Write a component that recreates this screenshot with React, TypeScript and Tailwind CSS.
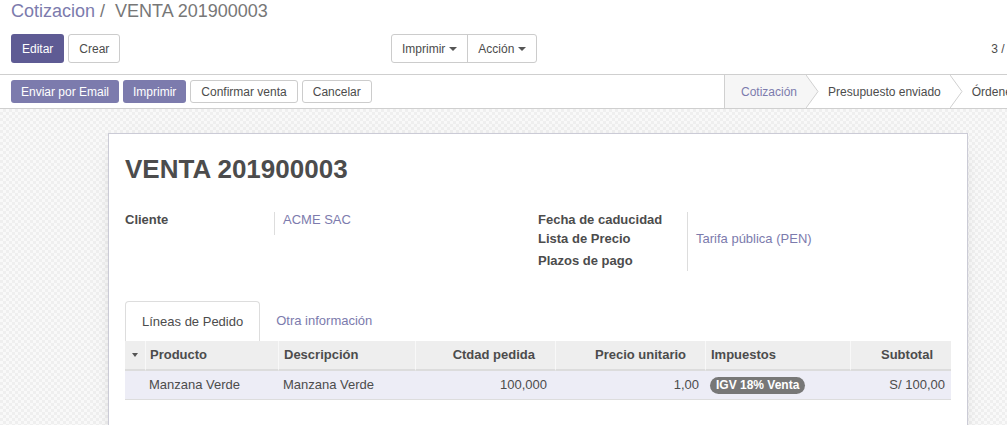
import React from 'react';

const Caret = () => (
  <span className="ml-[4px] inline-block h-0 w-0 border-x-[4px] border-t-[4px] border-x-transparent border-t-[#555] align-middle" />
);

const Arrow = ({ active }: { active?: boolean }) => (
  <svg className="absolute right-[-12px] top-0 z-10" width="13" height="33" viewBox="0 0 13 33">
    <polygon points="0,0 12,16.5 0,33" fill={active ? '#f6f6f6' : '#ffffff'} />
    <polyline points="0,0 12,16.5 0,33" fill="none" stroke="#d0d0d0" strokeWidth="1" />
  </svg>
);

const App: React.FC = () => {
  const status = [
    { label: 'Cotización', active: true, pl: 'pl-[16px]' },
    { label: 'Presupuesto enviado', active: false, pl: 'pl-[21px]' },
    { label: 'Órdenes de venta', active: false, pl: 'pl-[21px]' },
  ];

  return (
    <div className="h-[425px] w-[1007px] overflow-hidden bg-white font-['Liberation_Sans',Arial,sans-serif] text-[13px] text-[#4c4c4c]">
      {/* control panel */}
      <div className="border-b border-[#cfcfcf] pb-[11px]">
        <div className="h-[22px] whitespace-nowrap pl-[11px] text-[18px] leading-[22px]">
          <span className="text-[#7c7bad]">Cotizacion</span>
          <span className="text-[#777]"> /&nbsp; VENTA 201900003</span>
        </div>
        <div className="mt-[12px] flex h-[29px] items-stretch whitespace-nowrap text-[12px]">
          <div className="flex w-[391px] shrink-0 gap-[4px] pl-[11px]">
            <button className="rounded-[3px] bg-[#5e5b94] px-[11px] text-white">Editar</button>
            <button className="rounded-[3px] border border-[#ccc] bg-white px-[10px] text-[#4c4c4c]">Crear</button>
          </div>
          <div className="flex shrink-0 rounded-[3px] border border-[#ccc] bg-white">
            <button className="flex items-center border-r border-[#ccc] pl-[10px] pr-[10px]">
              Imprimir
              <Caret />
            </button>
            <button className="flex items-center pl-[10px] pr-[10px]">
              Acción
              <Caret />
            </button>
          </div>
          <div className="ml-[454px] flex shrink-0 items-center">3 / 4</div>
        </div>
      </div>

      {/* statusbar */}
      <div className="flex h-[34px] whitespace-nowrap border-b border-[#cfcfcf] text-[12px]">
        <div className="flex w-[724px] shrink-0 gap-[4px] pl-[11px] pt-[5px]">
          <button className="h-[23px] rounded-[3px] bg-[#7c7bad] px-[10px] text-white">Enviar por Email</button>
          <button className="h-[23px] rounded-[3px] bg-[#7c7bad] px-[10px] text-white">Imprimir</button>
          <button className="h-[23px] rounded-[3px] border border-[#ccc] bg-white px-[10px]">Confirmar venta</button>
          <button className="h-[23px] rounded-[3px] border border-[#ccc] bg-white px-[10px]">Cancelar</button>
        </div>
        <div className="flex shrink-0 border-l border-[#d0d0d0]">
          {status.map((s) => (
            <div
              key={s.label}
              className={`relative flex h-[33px] items-center ${s.pl} pr-[10px] ${
                s.active ? 'bg-[#f6f6f6] text-[#7c7bad]' : 'bg-white text-[#4c4c4c]'
              }`}
            >
              {s.label}
              <Arrow active={s.active} />
            </div>
          ))}
        </div>
      </div>

      {/* sheet background */}
      <div className="h-full bg-[image:repeating-conic-gradient(#efefef_0_25%,#f9f9f9_0_50%)] bg-[length:6px_6px] pt-[24px]">
        <div className="ml-[108px] w-[860px] border border-[#cbcbd6] bg-white px-[16px] pb-[60px] pt-[20px] shadow-[0_5px_20px_-15px_rgba(0,0,0,0.6)]">
          <h1 className="h-[30px] text-[26px] font-bold leading-[30px] text-[#4c4c4c]">VENTA 201900003</h1>

          <div className="mt-[28px] grid grid-cols-2">
            <div className="flex items-start">
              <div className="flex h-[23px] w-[150px] border-r border-[#ddd] font-bold leading-[16px]">Cliente</div>
              <div className="pl-[8px] leading-[16px] text-[#7c7bad]">ACME SAC</div>
            </div>
            <div className="flex">
              <div className="w-[150px] border-r border-[#ddd] font-bold">
                <div className="h-[16px] leading-[16px]">Fecha de caducidad</div>
                <div className="h-[21px] leading-[21px]">Lista de Precio</div>
                <div className="h-[22px] pt-[1px] leading-[21px]">Plazos de pago</div>
              </div>
              <div className="pl-[8px]">
                <div className="h-[16px]" />
                <div className="h-[21px] leading-[21px] text-[#7c7bad]">Tarifa pública (PEN)</div>
              </div>
            </div>
          </div>

          {/* notebook */}
          <div className="mt-[30px] flex h-[40px]">
            <div className="flex items-center rounded-t-[4px] border-x border-t border-[#ddd] bg-white px-[16px]">
              Líneas de Pedido
            </div>
            <div className="flex items-center px-[16px] text-[#7c7bad]">Otra información</div>
          </div>

          <div className="grid grid-cols-[20px_133px_137px_140px_150px_145px_101px] whitespace-nowrap">
            {/* header */}
            <div className="flex h-[30px] items-center justify-center border-b-2 border-[#dcdcdc] bg-[#eeeeee]">
              <span className="inline-block h-0 w-0 border-x-[3.5px] border-t-[4px] border-x-transparent border-t-[#555]" />
            </div>
            <div className="flex h-[30px] items-center border-b-2 border-l border-[#dcdcdc] border-l-[#f8f8f8] bg-[#eeeeee] pl-[4px] font-bold">
              Producto
            </div>
            <div className="flex h-[30px] items-center border-b-2 border-l border-[#dcdcdc] border-l-[#f8f8f8] bg-[#eeeeee] pl-[5px] font-bold">
              Descripción
            </div>
            <div className="flex h-[30px] items-center justify-end border-b-2 border-l border-[#dcdcdc] border-l-[#f8f8f8] bg-[#eeeeee] pr-[20px] font-bold">
              Ctdad pedida
            </div>
            <div className="flex h-[30px] items-center justify-end border-b-2 border-l border-[#dcdcdc] border-l-[#f8f8f8] bg-[#eeeeee] pr-[19px] font-bold">
              Precio unitario
            </div>
            <div className="flex h-[30px] items-center border-b-2 border-l border-[#dcdcdc] border-l-[#f8f8f8] bg-[#eeeeee] pl-[5px] font-bold">
              Impuestos
            </div>
            <div className="flex h-[30px] items-center justify-end border-b-2 border-l border-[#dcdcdc] border-l-[#f8f8f8] bg-[#eeeeee] pr-[18px] font-bold">
              Subtotal
            </div>

            {/* row */}
            <div className="h-[29px] border-b border-[#dddddd] bg-[#ededf6]" />
            <div className="flex h-[29px] items-center border-b border-[#dddddd] bg-[#ededf6] pl-[4px]">Manzana Verde</div>
            <div className="flex h-[29px] items-center border-b border-[#dddddd] bg-[#ededf6] pl-[5px]">Manzana Verde</div>
            <div className="flex h-[29px] items-center justify-end border-b border-[#dddddd] bg-[#ededf6] pr-[8px]">100,000</div>
            <div className="flex h-[29px] items-center justify-end border-b border-[#dddddd] bg-[#ededf6] pr-[6px]">1,00</div>
            <div className="flex h-[29px] items-center border-b border-[#dddddd] bg-[#ededf6] pl-[5px]">
              <span className="rounded-full bg-[#777] px-[6px] text-[12px] font-bold leading-[17px] text-white">IGV 18% Venta</span>
            </div>
            <div className="flex h-[29px] items-center justify-end border-b border-[#dddddd] bg-[#ededf6] pr-[6px]">S/ 100,00</div>
          </div>
        </div>
      </div>
    </div>
  );
};

export default App;
